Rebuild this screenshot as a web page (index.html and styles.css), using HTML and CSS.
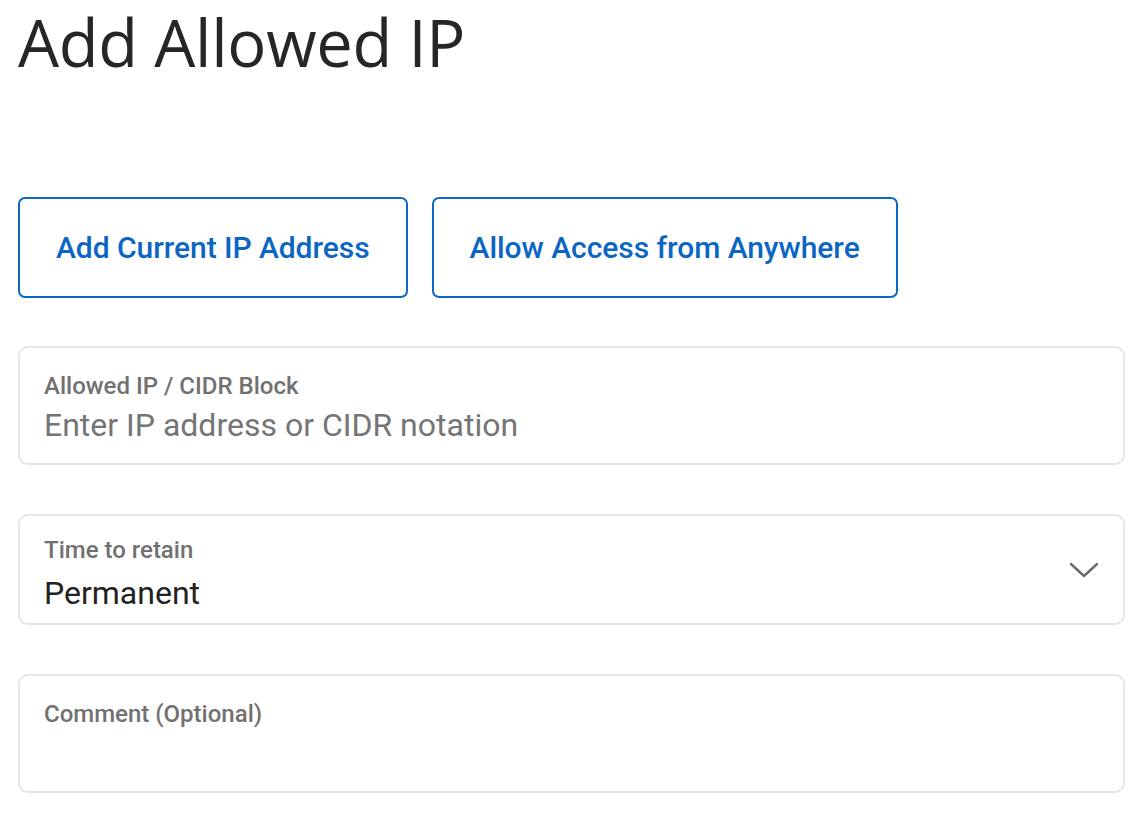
FILE: index.html
```html
<!DOCTYPE html>
<html lang="en">
<head>
<meta charset="utf-8">
<title>Add Allowed IP</title>
<link rel="stylesheet" href="styles.css">
</head>
<body>
<main class="page">
  <h1 class="title">Add Allowed IP</h1>
  <div class="actions">
    <button class="btn" type="button">Add Current IP Address</button>
    <button class="btn" type="button">Allow Access from Anywhere</button>
  </div>
  <div class="fields">
    <label class="field">
      <span class="field-label">Allowed IP / CIDR Block</span>
      <span class="field-value placeholder">Enter IP address or CIDR notation</span>
    </label>
    <div class="field field-select">
      <div class="field-body">
        <span class="field-label">Time to retain</span>
        <span class="field-value">Permanent</span>
      </div>
      <svg class="chevron" width="30" height="16" viewBox="0 0 30 16" aria-hidden="true">
        <path d="M2 2 L15 14 L28 2" fill="none" stroke="#6b6b6b" stroke-width="2.4" stroke-linecap="round" stroke-linejoin="round"/>
      </svg>
    </div>
    <label class="field field-comment">
      <span class="field-label">Comment (Optional)</span>
    </label>
  </div>
</main>
</body>
</html>
```

FILE: styles.css
```css
* { box-sizing: border-box; }
html, body { margin: 0; padding: 0; background: #ffffff; }
body { font-family: Roboto, "Liberation Sans", sans-serif; color: #222222; }

.page {
  padding: 0 18px;
}

.title {
  margin: -2px 0 0 0;
  font-family: "Open Sans", "Noto Sans", sans-serif;
  font-weight: 400;
  font-size: 65px;
  line-height: 88px;
  color: #262626;
  letter-spacing: -0.3px;
}

.actions {
  display: flex;
  gap: 24px;
  margin-top: 111px;
}

.btn {
  height: 101px;
  padding: 0 36px;
  background: #ffffff;
  border: 2px solid #0b68c5;
  border-radius: 7px;
  font-family: Roboto, "Liberation Sans", sans-serif;
  font-weight: 500;
  font-size: 30px;
  letter-spacing: -0.05px;
  color: #0b66c3;
}

.fields {
  display: flex;
  flex-direction: column;
  gap: 49px;
  margin-top: 48px;
}

.field {
  display: flex;
  flex-direction: column;
  border: 2px solid #e6e6e6;
  border-radius: 10px;
  padding: 24px 24px 0 24px;
  height: 119px;
}

.field-label {
  font-size: 24px;
  font-weight: 500;
  color: #717171;
  line-height: 28px;
}

.field-value {
  font-size: 32px;
  line-height: 40px;
  margin-top: 5px;
  color: #222222;
}

.placeholder { color: #757575; }

.field-select {
  flex-direction: row;
  align-items: center;
  height: 111px;
  padding: 0 24px 0 24px;
}

.field-body {
  flex: 1;
  align-self: stretch;
  display: flex;
  flex-direction: column;
  padding-top: 20px;
}

.field-select .field-value { margin-top: 9px; }

.chevron { flex: none; }
```
